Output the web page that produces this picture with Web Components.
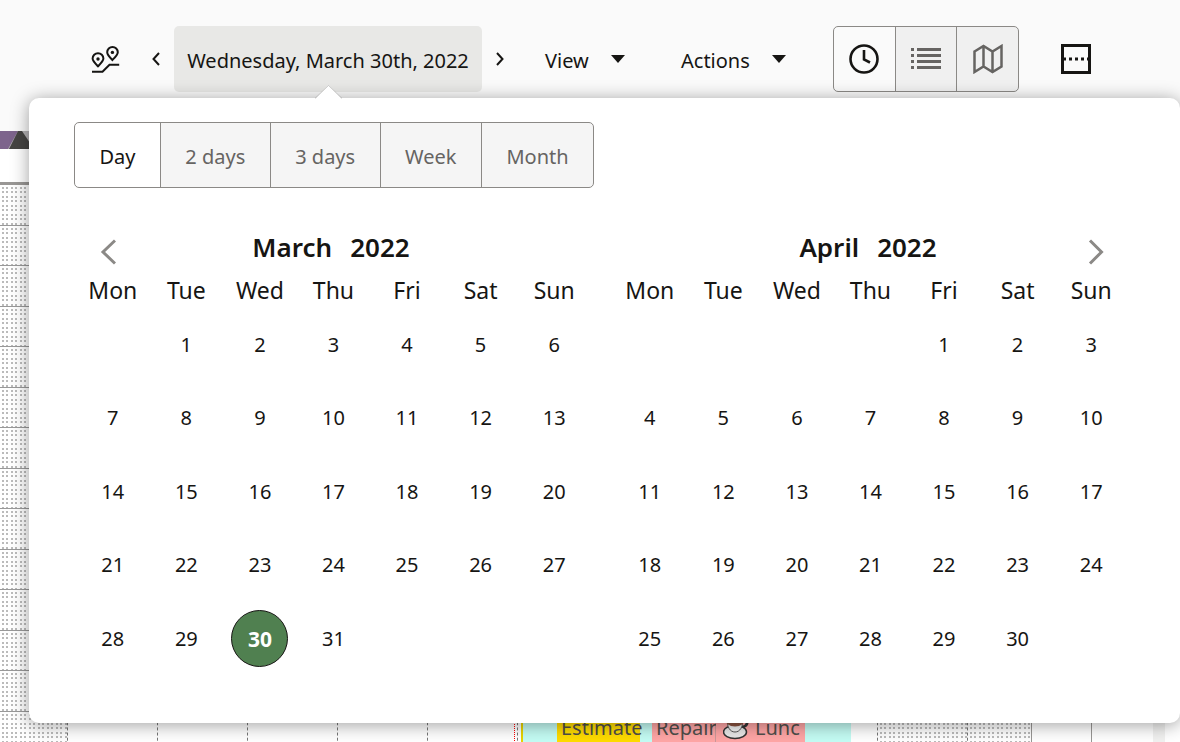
<!DOCTYPE html>
<html lang="en">
<head>
<meta charset="utf-8">
<title>Dispatch schedule</title>
<style>
  body { margin: 0; font-family: "Noto Sans", "Open Sans", sans-serif; color: #161513; background: #fff; }
</style>
</head>
<body>
<dispatch-app></dispatch-app>

<script>
const define = (name, html, setup) => {
  const template = document.createElement('template');
  template.innerHTML = html;
  customElements.define(name, class extends HTMLElement {
    constructor() {
      super();
      this.attachShadow({ mode: 'open' }).append(template.content.cloneNode(true));
    }
    connectedCallback() { if (setup) setup(this, this.shadowRoot); }
  });
};

/* Toolbar drop-down trigger */
define('menu-button', `
  <style>
    :host { display: block; }
    button { display: flex; align-items: center; justify-content: space-between; gap: 20px; width: 100%; height: 66px;
      padding: 4px 0 0; border: 0; background: none; font: inherit; color: inherit; white-space: nowrap; }
    svg { display: block; flex: none; margin-bottom: 5px; }
  </style>
  <button type="button" aria-haspopup="menu"><slot></slot>
    <svg width="14" height="8" viewBox="0 0 14 8"><path d="M0 0h14L7 8z" fill="#161513"/></svg>
  </button>`);

/* Row of joined toggle buttons */
define('toggle-group', `
  <style>
    :host { display: inline-flex; box-sizing: border-box; height: 66px; border: 1px solid #8b8986; border-radius: 5px; overflow: hidden; }
    ::slotted(button) { margin: 0; padding: 0 24px; border: 0; border-left: 1px solid #8b8986; background: rgba(0,0,0,.04);
      color: #666462; font: inherit; display: flex; align-items: center; justify-content: center; }
    ::slotted(button:first-child) { border-left: 0; }
    ::slotted(button[aria-pressed="true"]) { background: transparent; color: #161513; }
  </style>
  <slot></slot>`);

define('app-toolbar', `
  <style>
    :host { display: flex; align-items: center; box-sizing: border-box; padding: 26px 20px 39px 90px; background: #fafafa; font-size: 20px; line-height: 28px; }
    svg { display: block; }
    .icon { padding: 0; border: 0; background: none; }
    nav { display: flex; margin-left: 18px; margin-right: 27px; }
    .step { width: 36px; padding: 0; border: 0; background: none; display: flex; align-items: center; justify-content: center; }
    .date { width: 308px; height: 66px; padding: 4px 0 0; border: 0; border-radius: 5px; background: #e8e8e6; font: inherit; color: inherit; white-space: nowrap; }
    .view { width: 80px; margin-right: 56px; }
    .actions { width: 105px; margin-right: 47px; }
    toggle-group { margin-right: 42px; width: 186px; }
    toggle-group button { flex: 1; padding: 0; }
  </style>
  <button class="icon" type="button" aria-label="Routes">
    <svg width="30" height="30" viewBox="0 0 30 30" fill="none" stroke="#161513" stroke-width="2">
      <path d="M8 22.3C5 19.300 2.600 17 2.600 14.600a5.400 5.400 0 0 1 10.800 0C13.400 17 11 19.300 8 22.300z"/>
      <path d="M22.400 16C19.400 13 17.200 10.700 17.200 8.200a5.300 5.300 0 0 1 10.600 0C27.800 10.700 25.400 13 22.400 16z"/>
      <circle cx="8" cy="15" r="1.700" fill="#161513" stroke="none"/><circle cx="22.400" cy="8.400" r="1.700" fill="#161513" stroke="none"/>
      <path d="M2 27.800h10.500l7-7H29.200"/>
    </svg>
  </button>
  <nav aria-label="Date">
    <button class="step" type="button" aria-label="Previous day"><svg width="8" height="14" viewBox="0 0 8 14" fill="none" stroke="#161513" stroke-width="2"><path d="M7 1L1.500 7 7 13"/></svg></button>
    <button class="date" type="button" aria-expanded="true">Wednesday, March 30th, 2022</button>
    <button class="step" type="button" aria-label="Next day"><svg width="8" height="14" viewBox="0 0 8 14" fill="none" stroke="#161513" stroke-width="2"><path d="M1 1l5.500 6L1 13"/></svg></button>
  </nav>
  <menu-button class="view">View</menu-button>
  <menu-button class="actions">Actions</menu-button>
  <toggle-group role="group" aria-label="Layout">
    <button type="button" aria-pressed="true" aria-label="Time view"><svg width="30" height="30" viewBox="0 0 30 30" fill="none" stroke="currentColor" stroke-width="2.600"><circle cx="15" cy="15" r="13.500"/><path d="M15 6v9.500l6 3"/></svg></button>
    <button type="button" aria-pressed="false" aria-label="List view"><svg width="30" height="30" viewBox="0 0 30 30" fill="none" stroke="currentColor" stroke-width="3"><path d="M0 5.500h3M6 5.500h24M0 11.500h3M6 11.500h24M0 17.500h3M6 17.500h24M0 23.500h3M6 23.500h24"/></svg></button>
    <button type="button" aria-pressed="false" aria-label="Map view"><svg width="30" height="30" viewBox="0 0 30 30" fill="none" stroke="currentColor" stroke-width="2.500"><path d="M1.500 7.500L10.500 2l9 5.500 9-5.500v20.500l-9 5.500-9-5.500-9 5.500zM10.500 2v20.500M19.500 7.500V28"/></svg></button>
  </toggle-group>
  <button class="icon" type="button" aria-label="Split view">
    <svg width="30" height="30" viewBox="0 0 30 30" fill="none" stroke="#161513" stroke-width="3"><path d="M1.500 1.500h27v27h-27z"/><path d="M2 15h26" stroke-dasharray="3 3"/></svg>
  </button>`);

/* One month of days; attributes: month, year, lead (blank cells), days, selected, arrow */
define('month-calendar', `
  <style>
    :host { display: block; flex: 1; min-width: 0; }
    header { display: grid; grid-template-columns: 64px 1fr 64px; height: 44px; }
    h2 { grid-column: 2; display: flex; justify-content: center; gap: 18px; margin: 0; padding-right: 5px; font-size: 26px; line-height: 38px; font-weight: 600; }
    .arrow { grid-row: 1; display: flex; align-items: center; justify-content: center; padding: 3px 0 0; border: 0; background: none; }
    .prev { grid-column: 1; } .next { grid-column: 3; }
    .arrow svg { display: block; }
    table { width: 100%; table-layout: fixed; border-collapse: collapse; }
    th { height: 36px; padding: 0; font-weight: 400; font-size: 23px; line-height: 36px; }
    td { height: 74px; padding: 0; text-align: center; }
    tr:nth-child(odd) td { height: 73px; }
    td button { box-sizing: border-box; width: 57px; height: 57px; padding: 0; border: 0; border-radius: 50%; background: none; font: inherit; font-size: 20px; color: inherit; display: block; margin: 0 auto; }
    td button[aria-pressed="true"] { background: #508050; border: 1px solid #161513; color: #fff; font-weight: 700; font-size: 21px; }
  </style>
  <header><h2><span class="m"></span><span class="y"></span></h2></header>
  <table><thead><tr></tr></thead><tbody></tbody></table>`, (host, root) => {
  const get = n => host.getAttribute(n);
  root.querySelector('.m').textContent = get('month');
  root.querySelector('.y').textContent = get('year');
  const next = get('arrow') === 'next';
  root.querySelector('header').insertAdjacentHTML('beforeend',
    `<button type="button" class="arrow ${next ? 'next' : 'prev'}" aria-label="${next ? 'Next' : 'Previous'} month">
      <svg width="16" height="26" viewBox="0 0 16 26" fill="none" stroke="#8b8986" stroke-width="3"><path d="${next ? 'M2 1.500L13.500 13 2 24.500' : 'M15 1.500L3 13 15 24.500'}"/></svg></button>`);
  root.querySelector('thead tr').innerHTML = ['Mon', 'Tue', 'Wed', 'Thu', 'Fri', 'Sat', 'Sun'].map(d => `<th scope="col">${d}</th>`).join('');
  const lead = +get('lead'), days = +get('days'), selected = +get('selected');
  let rows = '';
  for (let start = 1 - lead; start <= days; start += 7) {
    rows += '<tr>';
    for (let d = start; d < start + 7; d++) {
      rows += d < 1 || d > days ? '<td></td>' : `<td><button type="button" aria-pressed="${d === selected}">${d}</button></td>`;
    }
    rows += '</tr>';
  }
  root.querySelector('tbody').innerHTML = rows;
});

define('date-popup', `
  <style>
    :host { display: block; box-sizing: border-box; padding: 24px 52px 48px 45px; background: #fff; border-radius: 10px;
      box-shadow: 0 2px 18px rgba(0,0,0,.38); font-size: 20px; line-height: 28px; }
    .pointer { position: absolute; left: 286px; top: -13px; display: block; }
    toggle-group { display: flex; width: 520px; }
    toggle-group button { padding: 3px 0 0; flex: 1 1 auto; }
    .months { display: flex; gap: 22px; margin-top: 40px; padding-left: 2px; }
  </style>
  <svg class="pointer" width="27" height="14" viewBox="0 0 27 14"><path d="M0 14L13.500 0 27 14z" fill="#fff"/><path d="M0 13.500L13.500 .500 27 13.500" fill="none" stroke="#000" stroke-opacity=".18"/></svg>
  <toggle-group role="group" aria-label="Range">
    <button type="button" aria-pressed="true">Day</button>
    <button type="button" aria-pressed="false">2 days</button>
    <button type="button" aria-pressed="false">3 days</button>
    <button type="button" aria-pressed="false">Week</button>
    <button type="button" aria-pressed="false">Month</button>
  </toggle-group>
  <div class="months">
    <month-calendar month="March" year="2022" lead="1" days="31" selected="30" arrow="prev"></month-calendar>
    <month-calendar month="April" year="2022" lead="4" days="30" arrow="next"></month-calendar>
  </div>`);

/* Resource time grid behind the popup */
define('time-grid', `
  <style>
    :host { display: block; background: #fff; }
    .photo { display: block; height: 18px; }
    .hours { height: 33px; border-bottom: 3px solid #999795; }
    .row { display: flex; box-sizing: border-box; height: 41px; border-bottom: 1px solid #999; position: relative; }
    .row:nth-child(even) { height: 40px; }
    .cell { box-sizing: border-box; flex: none; width: 90px; border-right: 1px dashed #777; }
    .edge { width: 68px; }
    .solid { width: 64px; border-right: 1px solid #999795; }
    .short { width: 60px; border-right: 1px solid #999795; }
    .off { background-image: radial-gradient(circle at 3px 3px, #bbb 1px, transparent 1px), radial-gradient(circle at 7px 3px, #bbb 1px, transparent 1px),
      radial-gradient(circle at 3px 7px, #bbb 1px, transparent 1px), radial-gradient(circle at 7px 7px, #bbb 1px, transparent 1px); background-size: 9px 9px; }
    .scroll { width: 12px; margin-left: 61px; background: #f1f1f0; }
    .now { position: absolute; left: 514px; top: 0; bottom: 0; border-left: 1px dotted #f00; }
    .shift { position: absolute; left: 521px; top: 0; width: 330px; height: 40px; box-sizing: border-box; display: flex; background: #c4fcf4; border-left: 2px solid #e8d400; padding-left: 34px; font-size: 20px; line-height: 32px; color: #504e4a; }
    .job { box-sizing: border-box; white-space: nowrap; padding-left: 4px; }
    .estimate { width: 83px; background: #ffdc00; margin-right: 12px; }
    .repair { width: 64px; background: #ffa6a6; border-right: 1px solid #c99; }
    .lunch { width: 89px; background: #ffa6a6; display: flex; gap: 6px; padding-left: 7px; }
    .lunch svg { flex: none; }
  </style>
  <svg class="photo" width="60" height="18" viewBox="0 0 60 18"><path d="M0 0h60v18H0z" fill="#b5b3b5"/><path d="M0 0h18L8 18H0z" fill="#7d648c"/><path d="M18 0h4l12 18H9z" fill="#454442"/></svg>
  <div class="hours"></div>
  <div class="rows"></div>`, (host, root) => {
  const cells = '<div class="cell edge off"></div>' + '<div class="cell"></div>'.repeat(9) +
    '<div class="cell off"></div><div class="cell solid off"></div><div class="cell short"></div><div class="scroll"></div>';
  root.querySelector('.rows').innerHTML = `<div class="row">${cells}</div>`.repeat(13) +
    `<div class="row">${cells}<div class="now"></div><div class="shift">
      <div class="job estimate">Estimate</div><div class="job repair">Repair</div>
      <div class="job lunch"><svg width="26" height="28" viewBox="0 0 26 28"><path d="M19 8c7-2 7 7-1 7" fill="none" stroke="#333" stroke-width="3"/><ellipse cx="12" cy="20" rx="11.500" ry="6.500" fill="#e8e8e8" stroke="#333" stroke-width="1.500"/><path d="M4 7c0 8 3 13 8 13s8-5 8-13z" fill="#f4f4f4" stroke="#555" stroke-width="1"/><path d="M4 9h16v3q-8 5-16 0z" fill="#8a5340"/></svg><span>Lunc</span></div>
    </div></div>`;
});

define('dispatch-app', `
  <style>
    :host { display: block; position: relative; height: 100vh; overflow: hidden; }
    date-popup { position: absolute; top: 98px; left: 29px; right: 0; }
  </style>
  <app-toolbar></app-toolbar>
  <time-grid></time-grid>
  <date-popup></date-popup>`);
</script>
</body>
</html>
